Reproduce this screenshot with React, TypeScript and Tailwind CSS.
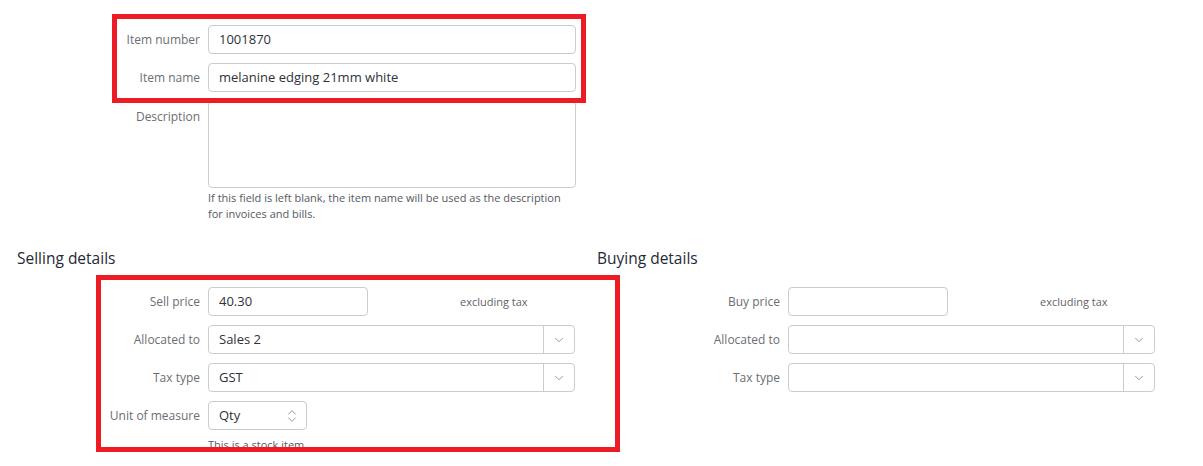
import { ChevronDown, ChevronsUpDown } from "lucide-react";

function Label({ children, top }: { children: React.ReactNode; top?: boolean }) {
  return (
    <div
      className={`w-[200px] shrink-0 text-right text-[12px] text-[#6b6e73] ${
        top ? "pt-[7px]" : "leading-[29px]"
      }`}
    >
      {children}
    </div>
  );
}

function TextInput({ value, width }: { value?: string; width: string }) {
  return (
    <div
      className={`${width} h-[29px] rounded-[4px] border border-[#c9ccd1] bg-white px-[10px] text-[13px] leading-[27px] text-[#2e3238]`}
    >
      {value}
    </div>
  );
}

function Select({ value }: { value?: string }) {
  return (
    <div className="flex h-[29px] w-[367px] rounded-[4px] border border-[#c9ccd1] bg-white">
      <div className="flex-1 px-[10px] text-[13px] leading-[27px] text-[#2e3238]">{value}</div>
      <div className="flex w-[31px] items-center justify-center border-l border-[#c9ccd1]">
        <ChevronDown className="h-[14px] w-[14px] text-[#8393a9]" strokeWidth={1.6} />
      </div>
    </div>
  );
}

function Row({ children }: { children: React.ReactNode }) {
  return <div className="flex items-start gap-[8px]">{children}</div>;
}

function DetailsColumn({
  title,
  priceLabel,
  price,
  allocated,
  tax,
  stock,
}: {
  title: string;
  priceLabel: string;
  price?: string;
  allocated?: string;
  tax?: string;
  stock?: boolean;
}) {
  return (
    <div className="w-[580px] shrink-0">
      <h2 className="pl-[17px] text-[15.5px] leading-[20px] text-[#1f2937]">{title}</h2>
      <div className="mt-[19px] flex flex-col gap-[9px]">
        <Row>
          <Label>{priceLabel}</Label>
          <TextInput value={price} width="w-[160px]" />
          <div className="ml-[84px] text-[11px] leading-[29px] text-[#5f6368]">excluding tax</div>
        </Row>
        <Row>
          <Label>Allocated to</Label>
          <Select value={allocated} />
        </Row>
        <Row>
          <Label>Tax type</Label>
          <Select value={tax} />
        </Row>
        {stock && (
          <Row>
            <Label>Unit of measure</Label>
            <div className="flex flex-col">
              <div className="flex h-[29px] w-[99px] items-center justify-between rounded-[4px] border border-[#c9ccd1] bg-white pl-[10px] pr-[6px] text-[13px] text-[#2e3238]">
                <span>Qty</span>
                <ChevronsUpDown className="h-[16px] w-[16px] text-[#8393a9]" strokeWidth={1.4} />
              </div>
              <div className="mt-[7px] text-[11px] leading-[16px] text-[#55595f]">
                This is a stock item
              </div>
            </div>
          </Row>
        )}
      </div>
    </div>
  );
}

export default function App() {
  return (
    <div
      className="relative h-[466px] w-[1203px] overflow-hidden bg-white"
      style={{ fontFamily: '"Open Sans", "Noto Sans", sans-serif' }}
    >
      {/* Item details */}
      <div className="flex flex-col gap-[9px] pt-[25px]">
        <Row>
          <Label>Item number</Label>
          <TextInput value="1001870" width="w-[368px]" />
        </Row>
        <Row>
          <Label>Item name</Label>
          <TextInput value="melanine edging 21mm white" width="w-[368px]" />
        </Row>
        <Row>
          <Label top>Description</Label>
          <div className="flex flex-col">
            <div className="h-[87px] w-[368px] rounded-[4px] border border-[#c9ccd1] bg-white" />
            <p className="mt-[2px] w-[368px] text-[11px] leading-[16px] text-[#55595f]">
              If this field is left blank, the item name will be used as the description for invoices and bills.
            </p>
          </div>
        </Row>
      </div>

      {/* Selling / Buying */}
      <div className="mt-[26px] flex">
        <DetailsColumn
          title="Selling details"
          priceLabel="Sell price"
          price="40.30"
          allocated="Sales 2"
          tax="GST"
          stock
        />
        <DetailsColumn title="Buying details" priceLabel="Buy price" />
      </div>

      {/* Annotation boxes */}
      <div className="pointer-events-none absolute left-[112px] top-[14px] h-[89px] w-[474px] border-[5px] border-[#ed1c24]" />
      <div className="pointer-events-none absolute left-[96px] top-[275px] h-[177px] w-[524px] border-[5px] border-[#ed1c24]" />
    </div>
  );
}
